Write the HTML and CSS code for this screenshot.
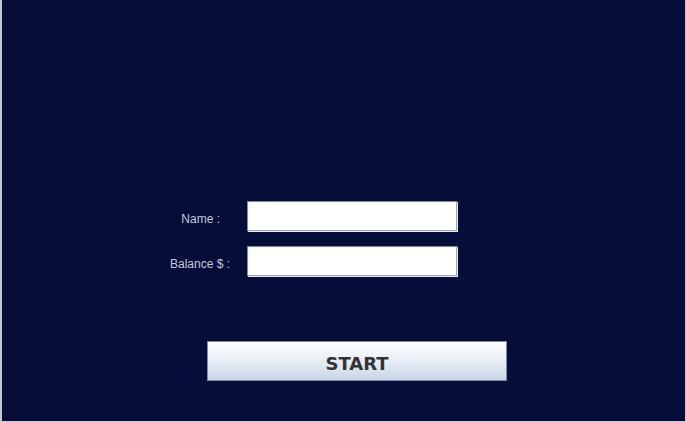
FILE: index.html
```html
<!DOCTYPE html>
<html>
<head>
<meta charset="utf-8">
<link rel="stylesheet" href="styles.css">
</head>
<body>
<div class="frame">
  <div class="panel">
    <div class="form">
      <div class="row">
        <label class="label name-label">Name :</label>
        <div class="field"></div>
      </div>
      <div class="row">
        <label class="label">Balance $ :</label>
        <div class="field"></div>
      </div>
    </div>
    <button class="start">START</button>
  </div>
</div>
</body>
</html>
```
FILE: styles.css
```css
html, body {
  margin: 0;
  padding: 0;
  width: 686px;
  height: 422px;
  overflow: hidden;
  background: #c8ccd2;
}
.frame {
  width: 686px;
  height: 422px;
  box-sizing: border-box;
  padding: 0 1px 1px 2px;
  background: #c6cad0;
}
.panel {
  height: 100%;
  background: #060d38;
  display: flex;
  flex-direction: column;
  align-items: flex-start;
}
.form {
  margin-top: 201px;
  display: flex;
  flex-direction: column;
  gap: 15px;
}
.row {
  display: flex;
  align-items: center;
  height: 30px;
}
.label {
  width: 245px;
  box-sizing: border-box;
  padding-right: 17px;
  padding-top: 6px;
  text-align: right;
  font-family: "Liberation Sans", Arial, sans-serif;
  font-size: 12px;
  color: #c4c6dc;
}
.name-label {
  padding-right: 27px;
}
.field {
  width: 210px;
  height: 30px;
  box-sizing: border-box;
  background: #ffffff;
  border: 1px solid #7f8b9c;
  border-right-color: #9aa4b2;
  border-bottom-color: #9aa4b2;
  box-shadow: 1px 1px 0 #e8ecf2, inset 1px 1px 0 #f4f6f8;
}
.start {
  margin-top: 65px;
  margin-left: 205px;
  width: 300px;
  height: 40px;
  box-sizing: border-box;
  border: 1px solid #7c8ba0;
  background: linear-gradient(to bottom, #ffffff 0%, #eef3f8 35%, #d8e2ee 75%, #c8d6e6 100%);
  font-family: "DejaVu Sans", "Liberation Sans", sans-serif;
  font-weight: bold;
  font-size: 18px;
  color: #333333;
  padding: 4px 0 0 0;
  cursor: default;
}
```
